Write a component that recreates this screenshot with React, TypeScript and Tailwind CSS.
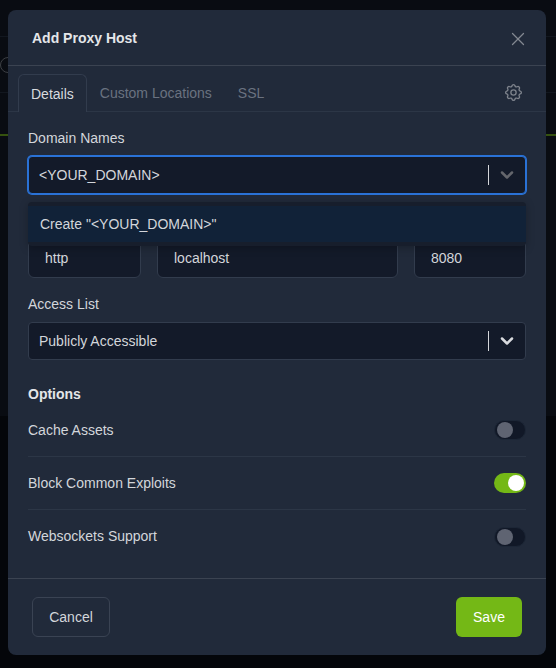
import { useState } from 'react'
import { ChevronDown, X } from 'lucide-react'
import { TbSettings } from 'react-icons/tb'

function Toggle({ on }: { on?: boolean }) {
  return (
    <span
      className={
        'flex h-[20px] w-[32px] items-center rounded-full px-[2px] ' +
        (on ? 'justify-end bg-[#74b816]' : 'justify-start border border-[#1c2636] bg-[#111827]')
      }
    >
      <span className={'h-[16px] w-[16px] rounded-full ' + (on ? 'bg-white' : 'bg-[#5f6472]')} />
    </span>
  )
}

function Field({ value, className }: { value: string; className: string }) {
  return (
    <div className={'flex h-[40px] items-center rounded-[6px] border border-[#323c4d] bg-[#131a29] pl-4 ' + className}>
      {value}
    </div>
  )
}

function Select({ value, focused }: { value: string; focused?: boolean }) {
  return (
    <div
      className={
        'flex h-[38px] items-center rounded-[4px] border bg-[#131a29] pl-[10px] ' +
        (focused ? 'border-[#2a72d6] ring-1 ring-[#2a72d6]' : 'border-[#323c4d]')
      }
    >
      <span className="flex-1">{value}</span>
      <span className="h-[20px] w-px bg-[#d4d6da]" />
      <span className="flex w-[36px] justify-center">
        <ChevronDown size={20} strokeWidth={3} className={focused ? 'text-[#64666c]' : 'text-[#d8dade]'} />
      </span>
    </div>
  )
}

const options = [
  { label: 'Cache Assets', on: false },
  { label: 'Block Common Exploits', on: true },
  { label: 'Websockets Support', on: false },
]

export default function App() {
  const [tabs] = useState(['Custom Locations', 'SSL'])

  return (
    <div className="relative h-[668px] w-[556px] overflow-hidden bg-[#090c12] font-['Liberation_Sans',sans-serif] text-[14px] text-[#d3d6db]">
      {/* page behind the modal, almost hidden by the backdrop */}
      <div className="absolute left-0 right-0 top-[36px] h-px bg-[#12171f]" />
      <div className="absolute left-0 right-0 top-[92px] h-px bg-[#12171f]" />
      <div className="absolute left-0 right-0 top-[134px] h-[2px] bg-[#35520f]" />
      <div className="absolute left-0 top-[57px] h-[16px] w-[16px] rounded-full border border-[#3c3f44]" />
      <div className="absolute left-0 right-0 top-[416px] h-[252px] bg-[#04060a]" />

      <div className="relative ml-2 mt-[10px] flex h-[645px] w-[538px] flex-col rounded-[8px] bg-[#212a3a]">
        <header className="flex h-[56px] items-center justify-between border-b border-[#3b4351] pl-6 pr-[17px] pt-[2px]">
          <h2 className="text-[14px] font-bold text-[#e4e6e9]">Add Proxy Host</h2>
          <X size={22} strokeWidth={1.4} className="text-[#838891]" />
        </header>

        <nav className="flex h-[46px] items-end border-b border-[#2c3646] px-[10px]">
          <span className="mb-[-1px] flex h-[38px] items-center rounded-t-[6px] border border-b-0 border-[#323c4d] bg-[#212a3a] px-3 pt-[2px] text-[#d8dade]">
            Details
          </span>
          {tabs.map((t) => (
            <span key={t} className="flex h-[38px] items-center px-[13px] pt-[2px] text-[#6a7280]">
              {t}
            </span>
          ))}
          <TbSettings size={21} strokeWidth={1.5} className="mb-[8px] ml-auto mr-[12px] text-[#7e838c]" />
        </nav>

        <div className="flex flex-1 flex-col px-5 pt-[18px]">
          <label className="mb-[10px] leading-[16px]">Domain Names</label>
          <Select value="<YOUR_DOMAIN>" focused />

          <div className="relative mt-[6px] h-[78px]">
            <div className="absolute left-0 right-0 top-[2px] z-10 flex h-[44px] items-center rounded-[4px] border-y-[4px] border-[#171e2c] bg-[#112238] pl-3 shadow-[0_2px_8px_rgba(0,0,0,0.25)]">
              Create "&lt;YOUR_DOMAIN&gt;"
            </div>
            <div className="flex gap-4 pt-[38px]">
              <Field value="http" className="w-[113px]" />
              <Field value="localhost" className="flex-1" />
              <Field value="8080" className="w-[112px]" />
            </div>
          </div>

          <label className="mb-[10px] mt-[18px] leading-[16px]">Access List</label>
          <Select value="Publicly Accessible" />

          <h3 className="mt-[26px] font-bold leading-[16px] text-[#e4e6e9]">Options</h3>
          <ul className="mt-[2px]">
            {options.map((o, i) => (
              <li
                key={o.label}
                className={'flex h-[53px] items-center justify-between ' + (i < 2 ? 'border-b border-[#2c3646]' : '')}
              >
                {o.label}
                <Toggle on={o.on} />
              </li>
            ))}
          </ul>
        </div>

        <footer className="flex h-[77px] items-center justify-between border-t border-[#3b4351] pl-6 pr-6">
          <button className="h-[40px] w-[78px] rounded-[6px] border border-[#3a4353]">Cancel</button>
          <button className="h-[40px] w-[66px] rounded-[6px] bg-[#74b816] text-white">Save</button>
        </footer>
      </div>
    </div>
  )
}
